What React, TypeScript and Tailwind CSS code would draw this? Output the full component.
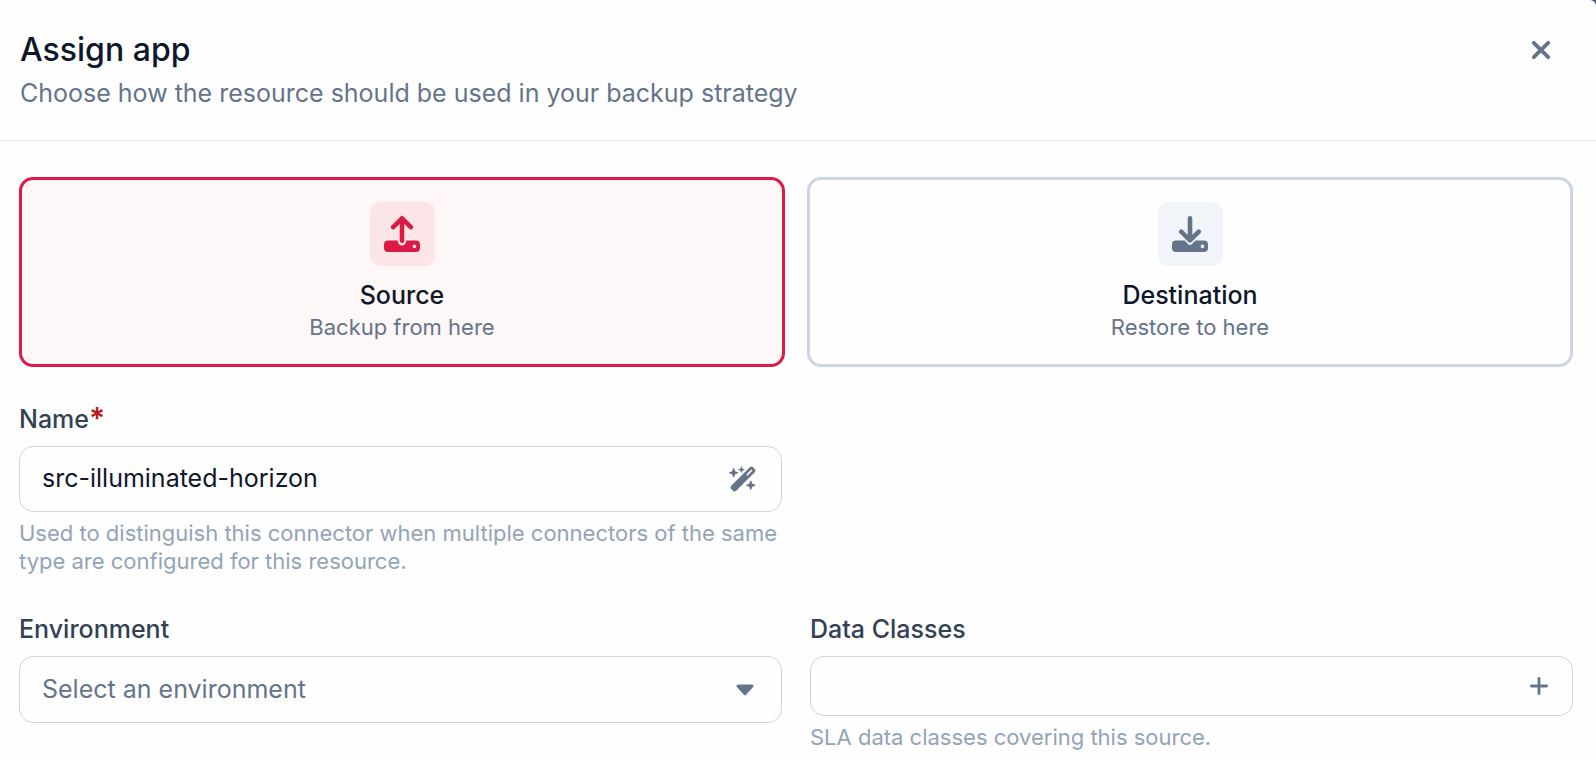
import { useState } from "react";
import { FaWandMagicSparkles } from "react-icons/fa6";

interface RoleCardProps {
  value: string;
  title: string;
  description: string;
  direction: "up" | "down";
  selected: boolean;
  onSelect: (value: string) => void;
}

const DriveIcon: React.FC<{ direction: "up" | "down" }> = ({ direction }) => (
  <svg viewBox="0 0 36 36" className="size-9" fill="none" stroke="currentColor" strokeWidth="4.6" strokeLinecap="round" strokeLinejoin="round">
    {direction === "up" ? (
      <>
        <path
          d="M4 24.6H13.8V25.2A4.2 4.2 0 0 0 22.2 25.2V24.6H32A4 4 0 0 1 36 28.6V32A4 4 0 0 1 32 36H4A4 4 0 0 1 0 32V28.6A4 4 0 0 1 4 24.6ZM30.4 28.6A1.8 1.8 0 1 0 30.4 32.2A1.8 1.8 0 1 0 30.4 28.6Z"
          fill="currentColor"
          fillRule="evenodd"
          stroke="none"
        />
        <path d="M18 24.8V2.4M9.2 11.2L18 2.4L26.8 11.2" />
      </>
    ) : (
      <>
        <path
          d="M4 24.6H12.6L16 28Q18 29.8 20 28L23.4 24.6H32A4 4 0 0 1 36 28.6V32A4 4 0 0 1 32 36H4A4 4 0 0 1 0 32V28.6A4 4 0 0 1 4 24.6ZM30.4 28.6A1.8 1.8 0 1 0 30.4 32.2A1.8 1.8 0 1 0 30.4 28.6Z"
          fill="currentColor"
          fillRule="evenodd"
          stroke="none"
        />
        <path d="M18 2.4V24M9.2 15.6L18 24.4L26.8 15.6" />
      </>
    )}
  </svg>
);

const RoleCard: React.FC<RoleCardProps> = ({ value, title, description, direction, selected, onSelect }) => (
  <label
    className={`flex flex-1 cursor-pointer flex-col items-center rounded-[14px] border-3 px-6 py-[22px] ${
      selected ? "border-[#dc1a46] bg-[#fdf7f7]" : "border-[#cbd5e3] bg-[#fefefe]"
    }`}
  >
    <input type="radio" name="role" value={value} checked={selected} onChange={() => onSelect(value)} className="sr-only" />
    <span
      className={`mb-3 flex h-16 w-[65px] items-center justify-center rounded-[10px] ${
        selected ? "bg-[#fbe5e7] text-[#dc1a46]" : "bg-[#f1f5f9] text-[#64748b]"
      }`}
    >
      <DriveIcon direction={direction} />
    </span>
    <span className="text-[25px] leading-[34px] font-medium text-[#0f172a]">{title}</span>
    <span className="text-[22px] leading-[30px] text-[#64748b]">{description}</span>
  </label>
);

const App: React.FC = () => {
  const [role, setRole] = useState("source");
  const [name, setName] = useState("src-illuminated-horizon");

  return (
    <div className="bg-gray-600 font-['Inter',sans-serif]">
      <main className="min-h-screen rounded-tr-md bg-[#fefefe]">
        <header className="flex items-start justify-between border-b border-[#e2e8f0] pt-7 pr-[33px] pb-[26px] pl-5">
          <div>
            <h1 className="text-[32px] leading-[44px] font-medium text-[#0f172a]">Assign app</h1>
            <p className="text-[25px] leading-[42px] text-[#64748b]">Choose how the resource should be used in your backup strategy</p>
          </div>
          <button type="button" aria-label="Close" className="flex size-11 items-center justify-center text-[#64748b]">
            <svg viewBox="0 0 20 20" className="size-5" stroke="currentColor" strokeWidth="3.8" strokeLinecap="round">
              <path d="M2.8 2.8L17.2 17.2M17.2 2.8L2.8 17.2" />
            </svg>
          </button>
        </header>

        <form className="pt-9 pr-[23px] pl-[19px]">
          <div className="flex gap-[22px]">
            <RoleCard
              value="source"
              title="Source"
              description="Backup from here"
              direction="up"
              selected={role === "source"}
              onSelect={setRole}
            />
            <RoleCard
              value="destination"
              title="Destination"
              description="Restore to here"
              direction="down"
              selected={role === "destination"}
              onSelect={setRole}
            />
          </div>

          <div className="mt-[33px] grid grid-cols-2 gap-x-7 gap-y-[35px]">
            <div>
              <label htmlFor="name" className="mb-2 flex text-[25px] leading-[38px] font-medium text-[#334155]">
                Name<span className="text-[30px] leading-9 font-semibold text-[#b91c1c]">*</span>
              </label>
              <div className="flex h-[66px] items-center rounded-[14px] border border-[#cbd5e1] pr-6 pl-[22px]">
                <input
                  id="name"
                  value={name}
                  onChange={(e) => setName(e.target.value)}
                  className="min-w-0 flex-1 text-[25px] text-[#0f172a] outline-none"
                />
                <button type="button" aria-label="Generate name" className="text-[#64748b]">
                  <FaWandMagicSparkles className="size-7" />
                </button>
              </div>
              <p className="mt-[7px] text-[22px] leading-[28px] text-[#94a3b8]">
                Used to distinguish this connector when multiple connectors of the same type are configured for this resource.
              </p>
            </div>

            <div className="col-start-1">
              <label htmlFor="environment" className="mb-2 block text-[25px] leading-[38px] font-medium text-[#334155]">
                Environment
              </label>
              <div className="relative">
                <select
                  id="environment"
                  defaultValue=""
                  className="h-[67px] w-full appearance-none rounded-[14px] border border-[#cbd5e1] px-[22px] text-[25px] text-[#64748b]"
                >
                  <option value="">Select an environment</option>
                </select>
                <svg
                  viewBox="0 0 18 12"
                  className="pointer-events-none absolute inset-y-0 right-7 my-auto h-3 w-[18px] text-[#64748b]"
                  fill="currentColor"
                  stroke="currentColor"
                  strokeWidth="3"
                  strokeLinejoin="round"
                >
                  <path d="M2 2H16L9 9.8Z" />
                </svg>
              </div>
            </div>

            <div>
              <label htmlFor="data-classes" className="mb-2 block text-[25px] leading-[38px] font-medium text-[#334155]">
                Data Classes
              </label>
              <div className="flex h-[60px] items-center rounded-[14px] border border-[#cbd5e1] pr-6 pl-[22px]">
                <input id="data-classes" className="min-w-0 flex-1 text-[25px] text-[#0f172a] outline-none" />
                <button type="button" aria-label="Add data class" className="text-[#64748b]">
                  <svg viewBox="0 0 18 18" className="size-[18px]" stroke="currentColor" strokeWidth="2.8" strokeLinecap="round">
                    <path d="M9 1.4V16.6M1.4 9H16.6" />
                  </svg>
                </button>
              </div>
              <p className="mt-[7px] text-[22px] leading-[28px] text-[#94a3b8]">SLA data classes covering this source.</p>
            </div>
          </div>
        </form>
      </main>
    </div>
  );
};

export default App;
